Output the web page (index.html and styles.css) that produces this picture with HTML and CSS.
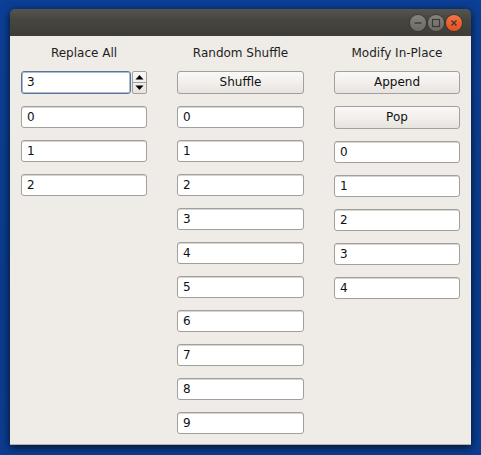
FILE: index.html
```
<!DOCTYPE html>
<html>
<head>
<meta charset="utf-8">
<link rel="stylesheet" href="styles.css">
</head>
<body>
<div class="desktop">
  <div class="window">
    <div class="titlebar">
      <span class="wbtn wmin"><svg width="16" height="16" viewBox="0 0 16 16"><line x1="4.5" y1="8" x2="11.5" y2="8" stroke="#3a3935" stroke-width="1.3"/></svg></span>
      <span class="wbtn wmax"><svg width="16" height="16" viewBox="0 0 16 16"><rect x="4.5" y="4.5" width="7" height="7" fill="none" stroke="#3a3935" stroke-width="1.2"/></svg></span>
      <span class="wbtn wclose"><svg width="16" height="16" viewBox="0 0 16 16"><path d="M5.5 5.5 L10.5 10.5 M10.5 5.5 L5.5 10.5" stroke="#3a3935" stroke-width="1.4"/></svg></span>
    </div>
    <div class="content">
      <div class="col">
        <div class="label">Replace All</div>
        <div class="spin">
          <div class="spin-field">3</div>
          <div class="spin-btns">
            <span class="arrow"><svg width="9" height="6" viewBox="0 0 9 6"><path d="M0.5 5.5 L4.5 1 L8.5 5.5 Z" fill="#000"/></svg></span>
            <span class="arrow"><svg width="9" height="6" viewBox="0 0 9 6"><path d="M0.5 0.5 L4.5 5 L8.5 0.5 Z" fill="#000"/></svg></span>
          </div>
        </div>
        <div class="entry">0</div>
        <div class="entry">1</div>
        <div class="entry">2</div>
      </div>
      <div class="col">
        <div class="label">Random Shuffle</div>
        <div class="button">Shuffle</div>
        <div class="entry">0</div>
        <div class="entry">1</div>
        <div class="entry">2</div>
        <div class="entry">3</div>
        <div class="entry">4</div>
        <div class="entry">5</div>
        <div class="entry">6</div>
        <div class="entry">7</div>
        <div class="entry">8</div>
        <div class="entry">9</div>
      </div>
      <div class="col">
        <div class="label">Modify In-Place</div>
        <div class="button">Append</div>
        <div class="button">Pop</div>
        <div class="entry">0</div>
        <div class="entry">1</div>
        <div class="entry">2</div>
        <div class="entry">3</div>
        <div class="entry">4</div>
      </div>
    </div>
  </div>
</div>
</body>
</html>
```
FILE: styles.css
```
html, body {
  margin: 0;
  padding: 0;
}
body {
  width: 481px;
  height: 455px;
  overflow: hidden;
  background: linear-gradient(180deg, #0c3f95 0%, #0a3b8c 60%, #0b3c8e 100%);
  font-family: "DejaVu Sans", sans-serif;
  font-size: 12px;
}
.desktop {
  padding: 9px 10px 0 10px;
}
.window {
  width: 461px;
  height: 436px;
  box-shadow: 0 2px 8px rgba(0, 0, 0, 0.75);
  border-radius: 5px 5px 0 0;
}
.titlebar {
  height: 27px;
  box-sizing: border-box;
  border-radius: 5px 5px 0 0;
  background: linear-gradient(180deg, #55544f 0%, #46453f 40%, #3d3c37 100%);
  display: flex;
  justify-content: flex-end;
  align-items: center;
  gap: 2px;
  padding-right: 9px;
  padding-top: 1px;
}
.wbtn {
  width: 16px;
  height: 16px;
  border-radius: 50%;
  display: flex;
  box-sizing: border-box;
}
.wmin, .wmax {
  background: linear-gradient(180deg, #86837d 0%, #6c6a65 100%);
  box-shadow: 0 0 0 1px #3a3934;
}
.wclose {
  background: linear-gradient(180deg, #f37443 0%, #e4501c 100%);
  box-shadow: 0 0 0 1px #3a3934;
}
.content {
  height: 409px;
  box-sizing: border-box;
  background: #efebe7;
  border-bottom: 1px solid #b5b1ad;
  display: grid;
  grid-template-columns: 126px 127px 126px;
  column-gap: 30px;
  padding: 9px 11px 0 11px;
}
.col {
  display: flex;
  flex-direction: column;
  gap: 12px;
}
.label {
  text-align: center;
  color: #1e1e1e;
  line-height: 16px;
  height: 16px;
  margin-bottom: -2px;
}
.entry {
  height: 22px;
  box-sizing: border-box;
  background: #ffffff;
  border: 1px solid #a39f9a;
  border-radius: 3px;
  padding-left: 5px;
  line-height: 20px;
  color: #101010;
  box-shadow: inset 0 1px 0 #d8d5d1;
}
.button {
  height: 23px;
  box-sizing: border-box;
  border: 1px solid #a39f9a;
  border-radius: 3px;
  background: linear-gradient(180deg, #faf9f8 0%, #f1eeeb 55%, #e7e3df 100%);
  text-align: center;
  line-height: 21px;
  color: #101010;
}
.spin {
  height: 23px;
  display: flex;
  gap: 1px;
}
.spin-field {
  flex: 1;
  box-sizing: border-box;
  background: #ffffff;
  border: 1px solid #5a7694;
  border-radius: 3px;
  padding-left: 5px;
  line-height: 21px;
  color: #101010;
  box-shadow: inset 0 0 0 1px #a9bccf;
}
.spin-btns {
  width: 15px;
  box-sizing: border-box;
  border: 1px solid #a39f9a;
  border-radius: 2px;
  display: flex;
  flex-direction: column;
  background: linear-gradient(180deg, #faf9f8 0%, #e7e3df 100%);
}
.arrow {
  flex: 1;
  display: flex;
  align-items: center;
  justify-content: center;
}
.arrow:first-child {
  border-bottom: 1px solid #a39f9a;
}
```
